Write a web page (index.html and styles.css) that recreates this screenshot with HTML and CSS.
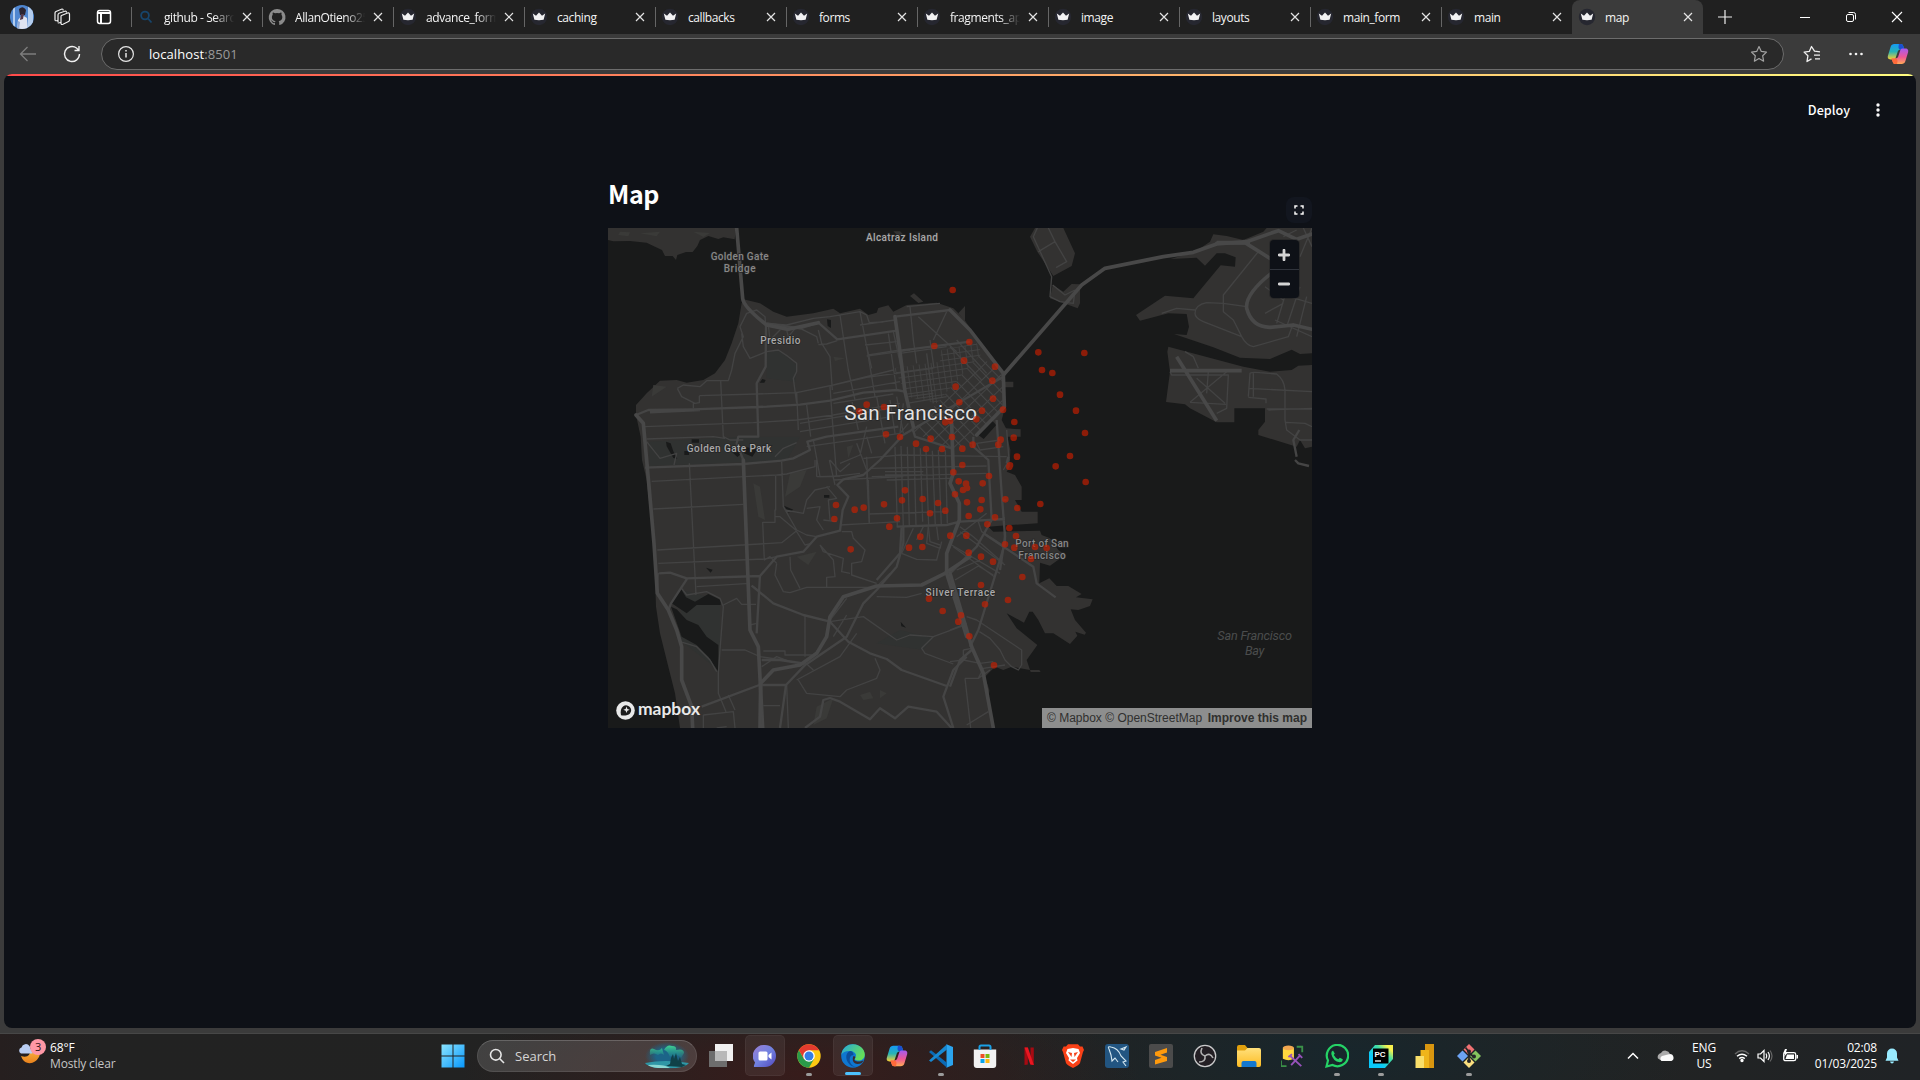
FILE: index.html
```html
<!DOCTYPE html>
<html lang="en">
<head>
<meta charset="utf-8">
<title>map</title>
<link rel="stylesheet" href="styles.css">
</head>
<body>
<svg class="defs" width="0" height="0">
  <defs>
    <linearGradient id="cpA" x1="0" y1="0" x2="0" y2="1"><stop offset="0" stop-color="#159af5"/><stop offset=".5" stop-color="#28b3b5"/><stop offset="1" stop-color="#ffd02e"/></linearGradient>
    <linearGradient id="cpB" x1="0" y1="0" x2="0" y2="1"><stop offset="0" stop-color="#a55af0"/><stop offset=".55" stop-color="#ee5795"/><stop offset="1" stop-color="#ffab55"/></linearGradient>
    <linearGradient id="win" x1="0" y1="0" x2="1" y2="1"><stop offset="0" stop-color="#8be4ff"/><stop offset="1" stop-color="#0797fb"/></linearGradient>
    <linearGradient id="edge" x1="0" y1="0" x2="1" y2=".5"><stop offset="0" stop-color="#25a7e0"/><stop offset="1" stop-color="#65df58"/></linearGradient>
    <linearGradient id="chat" x1="0" y1="0" x2="1" y2="1"><stop offset="0" stop-color="#9b7fd4"/><stop offset=".5" stop-color="#7182e0"/><stop offset="1" stop-color="#5247bd"/></linearGradient>
    <linearGradient id="pc" x1="0" y1="1" x2="1" y2="0"><stop offset=".3" stop-color="#09c9fb"/><stop offset=".65" stop-color="#43dfa4"/><stop offset=".85" stop-color="#f7f04e"/></linearGradient>
    <linearGradient id="fold" x1="0" y1="0" x2="0" y2="1"><stop offset="0" stop-color="#ffe07c"/><stop offset="1" stop-color="#fdbc22"/></linearGradient>
    <linearGradient id="moon" x1="0" y1="0" x2="0" y2="1"><stop offset="0" stop-color="#ffc24a"/><stop offset="1" stop-color="#e8811c"/></linearGradient>
    <symbol id="crown" viewBox="0 0 20 20"><circle cx="10" cy="10" r="8.2" fill="#262730"/><path d="M3.8 6.6 7 8.7 10 5.500l3 3.200 3.200-2.100-1.600 6.200q-4.600.9-9.200 0z" fill="#f2f2f4"/></symbol>
    <symbol id="x" viewBox="0 0 12 12"><path d="M2 2l8 8M10 2l-8 8" stroke="#e4e4e4" stroke-width="1.2" fill="none"/></symbol>
    <symbol id="copilot" viewBox="0 0 24 24"><path d="M8 1h7c2 0 2.500 1.500 3 3l1 3h-4c-2 0-3 1-3.500 3l-2 6c-.5 1.500-1 2-3 2H4c-3 0-3.500-2-3-4L4 4c.6-2 2-3 4-3z" fill="url(#cpA)"/><path d="M13 1h2c2 0 2.500 1.500 3 3l1 3h-4c-1.500 0-2-.5-2.500-2.500z" fill="#1b4fd0"/><path d="M16 23H9c-2 0-2.500-1.500-3-3l-1-3h4c2 0 3-1 3.500-3l2-6c.5-1.500 1-2 3-2H20c3 0 3.500 2 3 4l-3 10c-.6 2-2 3-4 3z" fill="url(#cpB)"/><path d="M11 23H9c-2 0-2.500-1.500-3-3l-1-3h4c1.500 0 2 .5 2.500 2.500z" fill="#ff6a3a"/></symbol>
  </defs>
</svg>

<header class="tabstrip">
  <div class="strip-left">
    <svg width="26" height="26" viewBox="0 0 26 26"><defs><clipPath id="av"><circle cx="13" cy="13" r="12"/></clipPath></defs><g clip-path="url(#av)"><path fill="#4f86d0" d="M0 0h26v26H0z"/><path fill="#b4cdee" d="M4 0h2v26H4zM19 0h5v26h-5z"/><path d="M10 5q4-4 7 1l-1 5h-5z" fill="#2b2430"/><path d="M8 26l1-10 4-5 5 3 1 12z" fill="#dfe3f0"/><path d="M12 10h3l-1 5-3 1z" fill="#54394a"/><path d="M9 17l2 1-1 8H8z" fill="#8fa9d6"/></g></svg>
    <svg width="18" height="18" viewBox="0 0 18 18" fill="none" stroke="#f0f0f0" stroke-width="1.200"><path d="M8.500 7.500l6-2.500q2-.7 2 1.200v5.800q0 1-1 1.500L10 16.300q-2 .7-2-1V8.500q0-.8.5-1zM5 14V7q0-1.200 1-1.700L12.500 3q1 0 1 1.500M5 14.500q0 .8 2.500 0M2 12V5q0-1 1-1.500L9 1q1.200-.2 1.200 1.500M2 12q0 1.200 2.500.5"/></svg>
    <svg width="16" height="16" viewBox="0 0 16 16" fill="none" stroke="#fff" stroke-width="1.500"><rect x="1.500" y="1.500" width="13" height="13" rx="2.200"/><path d="M1.500 4h13M5 4v10" stroke-width="2"/></svg>
  </div>
  <div class="tab"><svg class="fav" viewBox="0 0 20 20" fill="none" stroke="#17456b" stroke-width="1.800"><circle cx="9" cy="8.500" r="3.900"/><path d="M12 11.500l3.500 4"/></svg><span class="title fade">github - Search</span><svg class="x"><use href="#x"/></svg></div>
  <div class="tab"><svg class="fav" viewBox="0 0 20 20"><path fill="#8b8b8b" d="M10 2a8.200 8.200 0 0 0-2.600 16c.4.1.6-.2.6-.4v-1.500c-2.300.5-2.800-1-2.800-1-.4-1-.9-1.200-.9-1.200-.8-.5 0-.5 0-.5.9 0 1.300.9 1.300.9.8 1.300 2 1 2.500.7 0-.5.3-.9.5-1.100-1.800-.2-3.700-.9-3.700-4 0-.9.300-1.700.9-2.200-.1-.2-.4-1 .1-2.200 0 0 .7-.2 2.200.8a8 8 0 0 1 4 0c1.500-1 2.200-.8 2.200-.8.5 1.200.2 2 .1 2.200.5.600.9 1.300.9 2.200 0 3.100-1.900 3.800-3.700 4 .3.300.600.8.6 1.500v2.200c0 .2.100.5.600.4A8.200 8.200 0 0 0 10 2z"/></svg><span class="title fade">AllanOtieno254</span><svg class="x"><use href="#x"/></svg></div>
  <div class="tab"><svg class="fav"><use href="#crown"/></svg><span class="title fade">advance_form</span><svg class="x"><use href="#x"/></svg></div>
  <div class="tab"><svg class="fav"><use href="#crown"/></svg><span class="title">caching</span><svg class="x"><use href="#x"/></svg></div>
  <div class="tab"><svg class="fav"><use href="#crown"/></svg><span class="title">callbacks</span><svg class="x"><use href="#x"/></svg></div>
  <div class="tab"><svg class="fav"><use href="#crown"/></svg><span class="title">forms</span><svg class="x"><use href="#x"/></svg></div>
  <div class="tab"><svg class="fav"><use href="#crown"/></svg><span class="title fade">fragments_app</span><svg class="x"><use href="#x"/></svg></div>
  <div class="tab"><svg class="fav"><use href="#crown"/></svg><span class="title">image</span><svg class="x"><use href="#x"/></svg></div>
  <div class="tab"><svg class="fav"><use href="#crown"/></svg><span class="title">layouts</span><svg class="x"><use href="#x"/></svg></div>
  <div class="tab"><svg class="fav"><use href="#crown"/></svg><span class="title">main_form</span><svg class="x"><use href="#x"/></svg></div>
  <div class="tab"><svg class="fav"><use href="#crown"/></svg><span class="title">main</span><svg class="x"><use href="#x"/></svg></div>
  <div class="tab active"><svg class="fav"><use href="#crown"/></svg><span class="title">map</span><svg class="x"><use href="#x"/></svg></div>
  <svg class="plus" width="16" height="16" viewBox="0 0 16 16"><path d="M8 1v14M1 8h14" stroke="#eee" stroke-width="1.200"/></svg>
  <div class="winctl">
    <svg width="46" height="34" viewBox="0 0 46 34"><path d="M18 17.500h10" stroke="#fff"/></svg>
    <svg width="46" height="34" viewBox="0 0 46 34" fill="none" stroke="#fff"><rect x="18.500" y="14.500" width="7" height="7" rx="1.500"/><path d="M20.500 12.500h5q2 0 2 2v5"/></svg>
    <svg width="46" height="34" viewBox="0 0 46 34"><path d="M18 12l10 10M28 12L18 22" stroke="#fff" stroke-width="1.100"/></svg>
  </div>
</header>

<nav class="toolbar">
  <svg class="tb-back" width="20" height="20" viewBox="0 0 20 20" fill="none" stroke="#7d7d7d" stroke-width="1.300"><path d="M18 10H2.500M9.500 3L2.500 10l7 7"/></svg>
  <svg class="tb-reload" width="20" height="20" viewBox="0 0 20 20" fill="none" stroke="#f0f0f0" stroke-width="1.400"><path d="M17.500 10A7.500 7.500 0 1 1 14.500 4l2 2M17 2v4.500h-4.500"/></svg>
  <div class="omnibox">
    <svg width="18" height="18" viewBox="0 0 18 18" fill="none" stroke="#e6e6e6" stroke-width="1.200"><circle cx="9" cy="9" r="7.400"/><path d="M9 8v4.500M9 5v1.500" stroke-width="1.500"/></svg>
    <span class="url">localhost<i>:8501</i></span>
    <svg class="star" width="18" height="18" viewBox="0 0 18 18" fill="none" stroke="#a2a2a2" stroke-width="1.200" stroke-linejoin="round"><path d="M9 1.500l2.300 4.900 5.200.7-3.800 3.700.9 5.400L9 13.600l-4.600 2.600.9-5.400L1.500 7.100l5.200-.7z"/></svg>
  </div>
  <svg class="tb-fav" width="18" height="18" viewBox="0 0 18 18" fill="none" stroke="#f0f0f0" stroke-width="1.300" stroke-linejoin="round"><path d="M17 6.800l-5.500-.6L8.500 1.500 6.300 6.400l-5.200.7 3.800 3.700-.9 5.700 4.500-2.600M11 10.200h6M12 13.800h5"/></svg>
  <svg class="tb-dots" width="18" height="18" viewBox="0 0 18 18" fill="#f4f4f4"><circle cx="3.500" cy="9" r="1.300"/><circle cx="9" cy="9" r="1.300"/><circle cx="14.500" cy="9" r="1.300"/></svg>
  <svg class="tb-cop" width="22" height="22"><use href="#copilot"/></svg>
</nav>

<main class="viewport">
  <div class="page">
    <div class="stripe"></div>
    <div class="app-head"><span>Deploy</span><svg width="6" height="16" viewBox="0 0 6 16" fill="#fafafa"><circle cx="3" cy="3" r="1.700"/><circle cx="3" cy="8" r="1.700"/><circle cx="3" cy="13" r="1.700"/></svg></div>
    <section class="block">
      <h1>Map</h1>
      <div class="map">
        <svg class="mapsvg" width="704" height="500" viewBox="0 0 2112 1500">
          <defs>
            <pattern id="soma" width="25" height="29" patternUnits="userSpaceOnUse" patternTransform="rotate(-44)"><path d="M0 0H25M0 0V29" stroke="#454545" stroke-width="6" fill="none"/></pattern>
            <pattern id="hill" width="18" height="17" patternUnits="userSpaceOnUse" patternTransform="rotate(-8)"><path d="M0 0H18M0 0V17" stroke="#434343" stroke-width="5" fill="none"/></pattern>
          </defs>
          <rect width="2112" height="1500" fill="#191a1a"/>
          <g fill="#333231">
            <g transform="translate(-24 -174)">
              <path d="M24 174H408L404 208 370 202 355 207 325 198 300 210 292 228 278 246 258 246 232 255 228 270 218 258 195 258 186 240 165 230 140 218 90 213 40 214 24 210z"/>
              <path d="M430 388L480 400 520 425 560 440 640 430 700 416 720 430 780 416 805 435 830 428 835 414 865 406 880 425 920 405 1010 398 1060 415 1090 445 1150 530 1210 610 1215 635H1240V652H1215L1213 720 1205 750 1218 775 1262 778V800H1222L1231 840 1229 890 1220 905 1245 915 1265 950V990H1245L1265 1025H1313V1060L1230 1065 1165 1070 1180 1085 1320 1082 1325 1095 1350 1105 1375 1140 1395 1155 1350 1187 1320 1178 1318 1240 1348 1225 1370 1248H1405L1445 1272 1428 1282 1478 1288 1470 1308 1435 1320 1412 1318 1425 1350 1458 1388 1454 1394 1426 1385 1432 1397 1410 1422 1360 1390H1335L1315 1350 1298 1325 1288 1325 1272 1358 1220 1330 1240 1360 1250 1375 1312 1425 1280 1470 1290 1500 1235 1490 1210 1500 1185 1490 1155 1520 1168 1560 1165 1590 1183 1674H240L225 1570 205 1490 180 1390 168 1310 165 1220 155 1070 140 930 126 870 122 800 108 735V705L140 670 180 632 230 630 260 638 310 630 345 610 375 570 395 520 415 460 425 400z"/>
              <path d="M930 378l12-8 28 25-15 4zM880 184h20l8 8-14 6zM1075 430l20-22v45zM1290 1500h28l4 6h-30z"/>
            </g>
            <g transform="translate(1026 -114)">
              <path d="M255 114L240 140 262 185 310 258 365 228 375 190 340 114zM308 285L340 305 365 282 390 283V340L383 355 300 325z"/>
              <path d="M1086 114H950L940 125 880 150 830 138 790 133 780 155 735 185 662 207 740 203 765 227 800 190 825 190 857 202 855 230 812 226 730 325 645 317 558 375 570 392 655 370 710 372 717 410 710 435 672 432 790 472 870 503 960 507 1025 479 1050 492 1086 490z"/>
              <path d="M655 470L880 530 960 545 1025 540 1045 527 1086 525V770L1065 775 1050 750 1040 770 925 735V720L945 695V655H853V697H800L720 655 705 643 648 636 660 545 652 485z"/>
            </g>
          </g>
          <g fill="#303231" transform="translate(-24 -174)">
            <path d="M500 550L535 540 590 585 587 635 500 625zM147 815L430 800 600 800 560 872 150 888zM245 1260L360 1290V1440L355 1500 240 1410z"/>
            <path d="M900 1380L1000 1405 970 1440 830 1420z"/>
          </g>
          <g fill="#3a3a38" transform="translate(-24 -174)">
            <path d="M570 910l50-10-20 50-45 30zM460 940l20 10 15 100-20-10zM590 1160l60-15-25 40zM160 645l40 5-45 30zM650 1610l50-25-20 60-40 20zM780 1575l30-10 10 20-30 5zM840 1560l20 10-20 15zM700 560l35 5-30 8zM740 830l20-5-15 40zM60 185l30 2-5 12-30-4zM120 190l60-5-10 14zM280 185l50 4-20 12z"/>
          </g>
          <g fill="#191a1a" transform="translate(-24 -174)">
            <path d="M243 1257L215 1300 260 1330 290 1305 362 1305 362 1290 325 1272 285 1295 258 1282zM213 1310L245 1400 290 1425 325 1460 355 1505V1425L320 1400 295 1365 260 1350 230 1318zM198 815l14 5 8 24 12 22-12-2-20-35zM390 840l12-15 20 28-10 8zM432 830l40 8-15 22-25-10zM253 843h14v12h-14zM275 808h22v10h-22zM487 627l10 3-4 8h-14zM552 1007l28 12-14 9zM672 975h16v8h-16zM318 1193l20 6-6 9zM902 1355l16 18-14-4zM681 448l12 2v24l-10-6zM1135 795l42-42 12 12-38 42z"/>
          </g>
          <g transform="translate(576 336)">
            <path d="M335 275L540 45 605 105 609 205 520 290 518 310 458 328z" fill="url(#soma)"/>
            <path d="M280 85L420 65 424 30 530 10 545 40 410 190 325 170z" fill="url(#hill)"/>
          </g>
          <g class="road minor">
            <g transform="translate(-24 -174)">
              <path d="M232 655L250 645 300 650 320 632 385 632 395 600 405 550 430 500 420 470 440 430 470 420 495 440 497 465M425 490L430 530 450 565 500 545 535 540 565 560 590 580 590 605 580 625 590 700M500 460L560 465 640 445 690 440 780 425 800 435 808 458 850 456M655 480L665 520 690 560 697 660M720 435L745 600 765 690M780 425L800 530 825 680M655 524L680 522 712 512M298 677L470 672 590 668 700 645 800 622 1000 595M135 770L460 758 590 750 700 735 900 700M140 807L340 800 375 805M362 632L370 800 390 810 430 810M590 665L595 780M620 705L632 800M690 650L700 790 710 920M232 655L245 680 285 700 298 698V677M280 700V715M140 815L180 865 230 850 222 885M525 860L550 835 590 818M505 465L510 510 540 480 520 500M560 480L565 500 590 470 620 485 650 500 655 520M780 465L885 450M795 525L890 515M800 558L930 540M700 645L760 630 880 600M700 670L900 635M930 410L940 510M920 410L1020 400M955 440L1070 545M1000 510L1040 425M865 490L890 660M880 485L905 600M755 690L775 780M830 680L855 820M910 700L900 790M640 810L660 920 720 918M700 700L880 672M770 820L800 900M720 880L780 855 800 770M925 680L1000 670"/>
            </g>
            <g transform="translate(-24 696)">
              <path d="M155 64L530 45 560 42 645 20 645 0M160 147L430 133M172 270L545 248 590 212M175 310L495 297 530 290M268 10L288 405M545 5L550 140 590 210 620 225 650 230M527 45V150H525V187H488L493 300 510 290 530 310M290 380L450 370M245 385L260 405 320 395 360 415 370 440 360 570 355 640 355 700 378 755M370 435L410 415 425 433H468M240 545L290 560 330 600 350 635M172 400L175 340 210 338 260 355M365 570H435L480 590 550 600M310 765L400 755 405 804M310 765V804M385 705L405 750M455 377L475 390M615 465V590M490 573H555V585H640M485 620L530 590 570 605M690 485L790 470 890 540 930 525 1000 530 1090 497M1000 530L965 565 975 580 1060 612M595 660L620 700 720 710 740 690 830 655 840 630 825 595M570 290L572 330 600 385M530 310L525 345 550 395 570 398 620 382H820M680 382V352L705 350 700 300 660 255M725 215L755 215 760 235 795 270 785 305 755 310V345L830 370M805 60L808 190 720 195M808 190L900 185M700 60L910 50M650 50L700 50 780 40M688 0L705 75M690 0L720 35 750 10M800 35L808 190M650 0L650 50M590 212L540 170 527 170M555 150L610 160 620 120 645 90 690 80M680 80L710 115 685 120 690 180M620 145L660 140 650 180 670 210M670 180L710 185M590 215L615 255 635 250M660 255L670 275 730 295 725 335 750 340M740 465L700 530M740 415L690 480M830 410L920 412 965 400M770 520L720 590 590 660M490 737H540M560 675L565 804M450 495L470 490M905 280L950 298 1010 300 1020 260M940 205L905 280M985 200L990 245 1020 255M1010 200L1015 240M350 804L380 800M870 340L830 380M640 630L620 612"/>
            </g>
            <g transform="translate(576 336)">
              <path d="M200 350L208 550M285 320L292 560M303 318L310 560M322 320L328 560M342 322L348 560M361 325L368 545M378 330L386 558M397 332L406 558M415 330L424 556M436 330L442 550M190 355L300 345 620 350M210 385L560 378M215 410L560 400M255 395H370M255 405H370M260 420L450 415M205 522L440 515M300 40L440 20M205 45L300 30M200 20L215 85M340 0L350 70M380 40L400 190M390 0L402 85M0 250L270 205M0 275L260 232M20 320L300 280M200 290L215 340M450 20L545 120M470 0L560 100M320 190L440 170M330 220L420 205M290 170L310 280M270 180L285 280M325 250L300 280M600 300L530 310 540 330 610 320M620 270L627 360 610 390M620 480H610M455 615L600 700M470 690L540 660M480 560L520 590 610 670M470 590L560 520M385 560L380 610 420 625 425 605M370 560L350 600"/>
            </g>
            <g transform="translate(1026 696)">
              <path d="M30 215L165 315M10 260L135 352M15 360L85 318 130 345M85 185L95 215 165 260M50 470L80 480 215 570V615L205 630 185 620 165 600 150 570 120 535 88 515M45 655L85 655 100 625 165 615M45 655L62 804M40 570L65 565M40 570L40 600 90 610 130 605M0 510L50 490M0 605L40 600M50 795L115 755M85 655L120 630"/>
            </g>
            <g transform="translate(1026 -114)">
              <path d="M262 114L250 140 305 260 300 320 330 335 370 340 375 300M308 285L345 315 375 300M265 185L315 155 350 215 318 233M295 114L315 155M635 370L680 355 735 360M925 185L820 315V365L850 390 875 440M890 350L820 340 770 338Q735 345 735 370 735 385 760 395L875 440Q890 468 910 470L1015 440 1030 400M1060 114L1086 170M1000 340L945 370M985 310L1086 340M980 400L1010 300M1010 410L1050 290M975 390L1086 440M1040 440L1070 320M945 290L1000 330M1086 114L1050 200M1000 140L1040 120M660 545L665 555H835L830 655 800 670M720 637L830 545M720 637L828 643M775 545L770 610M740 565L825 640M705 485L730 500 745 535M895 620L900 550Q905 545 930 548L980 552Q1003 570 1005 600V690L1010 720 1050 750H1086M895 595L1086 605M895 622L948 627V640M950 657H1086M955 660L1086 655M1008 697L1065 700 1086 710M910 550V620"/>
            </g>
          </g>
          <g class="road mid">
            <path transform="translate(-24 -174)" d="M108 735L145 720 280 718 500 710 600 704 690 692 790 668 890 660 915 665M135 893L430 882 545 872 580 865 630 840 622 815 680 800 895 770M498 465L497 590 470 640 475 800 415 800 410 820 430 870V900M885 440L1050 420M900 542L1110 515M150 727L300 720M500 460L600 475 655 458 712 508 890 482"/>
            <path transform="translate(-24 696)" d="M178 340L210 338 260 355 480 348M262 355L213 430 205 450M480 345L470 520M305 740L478 675 560 675M540 804L558 675 620 610M485 600L540 600 620 612 740 530 790 430 830 390 890 320 910 250V200M455 377L520 430 610 465 690 485 745 545 810 580 860 597 905 630 1040 678M615 804L660 770 670 720 690 714 720 725 810 778 840 745 885 775 925 740 1010 755 1055 804M1100 590L1060 630 1030 710 1060 804M480 348L530 290 610 275 650 230 720 212 728 150 745 110 712 75 730 58 790 45 840 0 905 -70"/>
            <path transform="translate(576 336)" d="M290 560L440 555 480 545 615 537M305 560L300 640 230 720M337 262L345 290 455 325M610 110L300 290M520 290V320L565 360 575 540 530 620 450 700M590 240L605 460 615 590 600 690M620 370L625 350"/>
            <path transform="translate(1026 696)" d="M165 215L165 250 85 510 60 560M65 570L30 600 0 680M100 220L250 320 260 370 317 412M1035 0L1045 10 1077 18M1048 -90L1030 -60 1040 -10"/>
          </g>
          <g class="road major">
            <path transform="translate(-24 -174)" d="M410 174L428 385Q430 410 500 465M500 465L565 478 655 458M108 735L130 760 148 960 162 1120 172 1270 205 1320 230 1380 245 1430V1530L275 1610 278 1674M430 870L450 1380 475 1430 488 1674M885 440L900 545 915 665 940 770M1050 420L1110 480 1210 610"/>
            <path transform="translate(-24 696)" d="M482 670L520 630 600 615 650 580 680 530 690 470 730 410 830 378 965 375 1035 340 1110 290M480 804L482 670"/>
            <path transform="translate(576 336)" d="M610 105L613 200 530 285M455 250L460 400 450 430 478 490 478 540 440 640 440 700 500 889"/>
            <path transform="translate(1026 696)" d="M0 340L65 560 100 640 130 804"/>
            <path transform="translate(1026 -114)" d="M160 555L395 285 465 235 640 200 730 187 800 162 890 155 985 122 1040 148 1086 132M880 155L960 205M970 245Q885 310 890 355 905 412 960 412L1030 405 1086 418M800 160L890 158"/>
            <path transform="translate(1026 -114)" d="M680 500L800 692M660 542H875M800 158L900 158" class="butt"/>
          </g>
          <g class="label" text-anchor="middle">
            <text x="882" y="38" textLength="216">Alcatraz Island</text>
            <text x="395" y="95" textLength="174" class="dim">Golden Gate</text><text x="395" y="131" textLength="96" class="dim">Bridge</text>
            <text x="517" y="347" textLength="120">Presidio</text>
            <text x="363" y="671" textLength="253">Golden Gate Park</text>
            <text x="908" y="576" textLength="398" class="city">San Francisco</text>
            <text x="1302" y="956" textLength="160" class="dim">Port of San</text><text x="1302" y="992" textLength="142" class="dim">Francisco</text>
            <text x="1057" y="1103" textLength="209">Silver Terrace</text>
            <text x="1940" y="1235" textLength="224" class="bay">San Francisco</text><text x="1940" y="1282" textLength="58" class="bay">Bay</text>
          </g>
          <path class="points" transform="translate(576 336)" d="M458-150h0M403 18h0M508 6h0M492 62h0M585 80h0M577 122h0M467 140h0M478 187h0M579 176h0M200 194h0M252 201h0M178 214h0M546 212h0M609 209h0M529 238h0M450 243h0M436 247h0M643 246h0M641 293h0M456 291h0M602 299h0M595 314h0M518 314h0M258 283h0M300 291h0M348 311h0M392 296h0M378 327h0M426 327h0M487 326h0M651 350h0M630 376h0M628 380h0M487 375h0M460 397h0M567 408h0M476 424h0M498 431h0M501 444h0M489 450h0M548 430h0M465 463h0M315 451h0M306 481h0M368 477h0M414 489h0M252 493h0M191 503h0M164 509h0M108 495h0M103 537h0M390 520h0M436 512h0M501 487h0M545 480h0M541 508h0M506 528h0M585 532h0M562 553h0M616 478h0M652 504h0M721 492h0M291 535h0M268 560h0M152 628h0M361 590h0M367 621h0M327 623h0M451 587h0M499 587h0M506 638h0M543 650h0M579 665h0M615 613h0M628 564h0M648 588h0M643 623h0M705 621h0M740 624h0M693 657h0M667 711h0M715 37h0M853 39h0M726 90h0M757 99h0M780 164h0M828 212h0M855 279h0M810 348h0M767 379h0M857 426h0M543 735h0M555 793h0M624 780h0M483 826h0M475 845h0M508 889h0M582 976h0M387 776h0M428 813h0"/>
        </svg>
        <div class="full"><svg width="10" height="10" viewBox="0 0 10 10" fill="none" stroke="#fafafa" stroke-width="1.500"><path d="M1 3.500V1h2.500M6.500 1H9v2.500M9 6.500V9H6.500M3.500 9H1V6.500"/></svg></div>
        <div class="zoom"><b><svg width="12" height="12" viewBox="0 0 12 12"><path d="M6 1.200v9.600M1.200 6h9.600" stroke="#d4d4d4" stroke-width="2.800" stroke-linecap="round"/></svg></b><b><svg width="12" height="12" viewBox="0 0 12 12"><path d="M1.200 6h9.600" stroke="#d4d4d4" stroke-width="2.800" stroke-linecap="round"/></svg></b></div>
        <div class="logo"><svg width="19" height="19" viewBox="0 0 19 19"><circle cx="9.500" cy="9.500" r="9.300" fill="#e9e9e9"/><path d="M5 14.300C4.200 10 5 7.200 7 5.400a5 5 0 0 1 7 7C12 14.300 9 14.900 5 14.300z" fill="#1d1d1d"/><path d="M10.500 5.600l.9 2.300 2.300.9-2.300.9-.9 2.300-.9-2.300-2.300-.9 2.300-.9z" fill="#e9e9e9"/></svg><svg width="63" height="22" viewBox="0 0 63 22"><text x="0" y="16.300" textLength="62" lengthAdjust="spacingAndGlyphs">mapbox</text></svg></div>
        <div class="attrib"><span>© Mapbox © OpenStreetMap</span><strong>Improve this map</strong></div>
      </div>
    </section>
  </div>
</main>

<footer class="taskbar">
  <div class="weather">
    <svg width="30" height="30" viewBox="0 0 30 30"><path d="M3 18q9 3 10-7l8-3q3 5 0 11-4 7-11 6-5-1-7-7z" fill="url(#moon)"/><path d="M3 15.500a3.200 3.200 0 0 1 .5-6 4.500 4.500 0 0 1 8-1.500l3 7.500z" fill="#b9cdf2"/><circle cx="20" cy="9" r="8" fill="#ff98a6"/><text x="20" y="13" text-anchor="middle">3</text></svg>
    <div><p>68°F</p><p class="soft">Mostly clear</p></div>
  </div>
  <div class="center">
    <svg class="winlogo" width="24" height="24" viewBox="0 0 24 24"><path fill="url(#win)" d="M.5.500h11v11H.5zM12.500.5h11v11h-11zM.5 12.500h11v11H.5zM12.500 12.500h11v11h-11z"/></svg>
    <div class="search">
      <svg width="16" height="16" viewBox="0 0 16 16" fill="none" stroke="#e6e6e6" stroke-width="1.600"><circle cx="6.800" cy="6.800" r="5.300"/><path d="M10.800 10.800l4.200 4.200"/></svg>
      <span>Search</span>
      <svg class="art" width="46" height="28" viewBox="0 0 46 28"><defs><radialGradient id="sky"><stop offset=".5" stop-color="#1c6488"/><stop offset="1" stop-color="#1c6488" stop-opacity="0"/></radialGradient><linearGradient id="aur" x1="0" y1="0" x2="0" y2="1"><stop offset="0" stop-color="#3fd494"/><stop offset="1" stop-color="#1f8a90" stop-opacity=".3"/></linearGradient></defs><ellipse cx="23" cy="14" rx="22" ry="14" fill="url(#sky)"/><path d="M6 13q-1-8 4-6 5 3 8-1l2 7q-3-3-6 0-4-3-8 0zM20 8q3-6 8-4 5 0 4 4 8-2 8 3l-3 5q-3-4-6-2-4-1-5 1-2-6-6-7z" fill="url(#aur)"/><path d="M1 21q20-4 44 0-3 4-13 5H12q-9-2-11-5z" fill="#2f97a6"/><path d="M4 23q16-1 22 3H14q-8-1-10-3z" fill="#8bd8d2"/><path d="M22 24l4-2 1-6 2-4 1 5 2-6 2 8 2-4 2 7 4 1-4 2z" fill="#0f4148"/></svg>
    </div>
    <div class="apps">
      <div class="app"><svg viewBox="0 0 24 24"><path fill="#f0f0f0" d="M6 0h18v17H6z"/><path fill="#6d6d6d" d="M0 7h18v16H0z"/><path fill="#b9b9b9" d="M6 7h12v10H6z"/></svg></div>
      <div class="app hot"><svg viewBox="0 0 24 24"><path fill="url(#chat)" d="M12 1a11 11 0 1 1 0 22H2q-1.500 0-1-1.500l1-3A11 11 0 0 1 12 1z"/><rect x="5.500" y="7.500" width="9" height="9" rx="1.500" fill="#fff"/><path d="M15.500 11l3-2.500v7l-3-2.500z" fill="#fff"/></svg></div>
      <div class="app run"><svg viewBox="0 0 24 24"><circle cx="12" cy="12" r="11.700" fill="#fdc913"/><path d="M12 12L7 15 1.900 6.100A11.700 11.700 0 0 0 12 23.700l5-8.700z" fill="#2a9a49"/><path d="M12 12L7 15 1.900 6.100A11.700 11.700 0 0 1 22.200 6.300H12z" fill="#e33b2e"/><circle cx="12" cy="12" r="5.800" fill="#fff"/><circle cx="12" cy="12" r="4.500" fill="#347de6"/></svg></div>
      <div class="app hot on"><svg viewBox="0 0 24 24"><circle cx="12" cy="12" r="11.800" fill="#0f77d0"/><path d="M.3 11C1.500 3 7 0 12 .2c7 .2 11.800 5 11.800 10.300 0 4-3 6-6 6-3.600 0-4.500-1.500-3.600-2.500 2-3 0-6.500-4.500-7C5.500 6.500 1.500 8 .3 11z" fill="url(#edge)"/><path d="M9.700 7C5 7.500 4 14 7 18.500c2 3.300 6 5 9.500 4.500C11 23 7.500 18 9 13.500c.6-1.700 2-2.500 3.500-2.500 0-2-1-3.600-2.800-4z" fill="#0c4f9c"/><path d="M14.200 14c-2 2 0 3.500 3.500 3.500 1.500 0 3.500-.6 4.800-1-1 2.500-3 3.500-6 3.500-4 0-6-4-4-8 1 0 2.200.8 1.700 2z" fill="#3a2c2d"/></svg></div>
      <div class="app"><svg viewBox="-1 -1 26 26"><use href="#copilot" width="24" height="24"/></svg></div>
      <div class="app run"><svg viewBox="0 0 24 24"><path d="M17.500.3L24 3v18l-6.500 2.800z" fill="#2ba4ee"/><path d="M0 8l2-1.700 16 12.400v5z" fill="#0b6ab4"/><path d="M0 16.500l2 1.500L18 5.500V.3z" fill="#1889d2"/></svg></div>
      <div class="app"><svg viewBox="0 0 24 24"><path d="M.8 5.500h22.400V21q0 3-3 3H3.800q-3 0-3-3z" fill="#f2f2f2"/><path d="M6.500 6V3q0-1.500 1.500-1.500h8q1.500 0 1.500 1.500v3" fill="none" stroke="#1aa0e6" stroke-width="2"/><path fill="#ee4f24" d="M7.500 10h4v4h-4z"/><path fill="#7cb80d" d="M12.500 10h4v4h-4z"/><path fill="#06a3ec" d="M7.500 15h4v4h-4z"/><path fill="#fdb710" d="M12.500 15h4v4h-4z"/></svg></div>
      <div class="app"><svg viewBox="0 0 24 24"><path d="M7.500 3.500h3.300v17l-3.300.5zM13.500 3.500h3.300V21l-3.300-.5z" fill="#a60a12"/><path d="M7.500 3.500h3.400L16.800 21l-3.500-.5z" fill="#ea1621"/></svg></div>
      <div class="app"><svg viewBox="0 0 24 24"><path d="M7 .3h10l2 2.300 2.500 0L23 6l-1 2-3 11q-.7 2-7 5-6.300-3-7-5L2 8 1 6l1.600-3.400H5z" fill="#fa4117"/><path d="M12 4l5.500 1L19 9l-3 5 .5 2.500L12 20l-4.500-3.500L8 14 5 9l1.500-4z" fill="#fff"/><path d="M7 8l4 1-.5 4zM17 8l-4 1 .5 4zM9 15.500h6L12 18z" fill="#f4441c"/></svg></div>
      <div class="app"><svg viewBox="0 0 24 24"><rect width="24" height="24" rx="3" fill="#225581"/><path d="M4 5q-2-3 2-2 7 1 10 9l5 5-3 1 3 4M4 5q1 3 2 6l1 6 3-3 3 4M16 5l5-2-2 3z" fill="none" stroke="#d4e7f0" stroke-width="1.100"/></svg></div>
      <div class="app"><svg viewBox="0 0 24 24"><rect width="24" height="24" rx="2" fill="#4b4b4b"/><path d="M18 4v4.500l-6.500 2.200L18 13v4L6 20.500V16l6.500-2.200L6 11.500V8z" fill="#ff9a0c"/></svg></div>
      <div class="app"><svg viewBox="0 0 24 24" fill="none"><circle cx="12" cy="12" r="10.700" fill="#231f24" stroke="#c9c9ca" stroke-width="1.300"/><path d="M12 12q-6-2-3-8M12 12q5-4 8 2M12 12q1 6-6 6" stroke="#b3b3b3" stroke-width="1.600"/></svg></div>
      <div class="app"><svg viewBox="0 0 24 24"><path d="M0 3q0-2 2-2h6l2.500 3H22v5H0z" fill="#e1a00d"/><path d="M0 6.500h8l2.500-2.500H22q2 0 2 2V21q0 2-2 2H2q-2 0-2-2z" fill="url(#fold)"/><path d="M4.500 23v-4q0-2 2-2h11q2 0 2 2v4z" fill="#1478cf"/></svg></div>
      <div class="app"><svg viewBox="-1 0 26 24"><path d="M1 3h12v12q-6 3-12 0z" fill="#ffd83f"/><ellipse cx="7" cy="3.200" rx="6" ry="2.500" fill="#f3a750"/><path d="M16 2h6v6M-1 17v6h6" fill="none" stroke="#3b9148" stroke-width="2"/><path d="M9 12l12 11M10 22L20 11M7 13l4-3M18 10l4 4" stroke="#9752bc" stroke-width="2"/></svg></div>
      <div class="app run"><svg viewBox="0 0 24 24" fill="none"><path d="M1.500 22.500l1.500-6A10.700 10.700 0 1 1 7.500 21z" stroke="#25d366" stroke-width="2.200"/><path d="M8 6.500l1.800 3-1 1.500q1.500 3 4.500 4.200l1.500-1.500 3 1.500q-.3 3-3 3Q8 17.500 6.300 10 6 7 8 6.500z" fill="#25d366"/></svg></div>
      <div class="app run"><svg viewBox="0 0 24 24"><path d="M6 1h18v14l-8 9H0V8z" fill="url(#pc)"/><path d="M4 4.500h15.500v15H4z" fill="#000"/><text class="pct" x="5.500" y="12.500">PC</text><path d="M6 17h6" stroke="#fff" stroke-width="1.300"/></svg></div>
      <div class="app"><svg viewBox="0 0 24 24"><path d="M12 0h9v24h-9z" fill="#d9960f"/><path d="M7.500 6H16v18H7.500z" fill="#efb51b"/><path d="M2.500 12h8.500v12H2.500z" fill="#f9df6a"/></svg></div>
      <div class="app run"><svg viewBox="0 0 24 24"><path d="M12 0l5.500 5.500L12 11 6.500 5.500z" fill="#f07172"/><path d="M18.500 6.500L24 12l-5.500 5.500L13 12z" fill="#85c45e"/><path d="M12 13l5.500 5.500L12 24l-5.500-5.500z" fill="#fbdf7f"/><path d="M5.500 6.500L11 12l-5.500 5.500L0 12z" fill="#6da3f3"/><path d="M8.500 3.500L12 8v9M12 9l5 4" stroke="#252628" stroke-width="1.800" fill="none"/><g fill="#252628"><circle cx="12" cy="7.500" r="2"/><circle cx="12" cy="17" r="2"/><circle cx="17" cy="12.500" r="2"/></g></svg></div>
    </div>
  </div>
  <div class="tray">
    <svg class="chev" width="12" height="8" viewBox="0 0 12 8"><path d="M1 6.500l5-5 5 5" fill="none" stroke="#fff" stroke-width="1.500"/></svg>
    <svg class="cloud" width="18" height="12" viewBox="0 0 18 12"><path d="M1 8.500A4 4 0 0 1 4 3a5 5 0 0 1 9 1l-8 7z" fill="#aaa"/><path d="M4.500 11A3 3 0 0 1 5 6l8-2a3.700 3.700 0 0 1 1.500 7z" fill="#fafafa"/></svg>
    <div class="lang">ENG<br>US</div>
    <svg class="wifi" width="16" height="14" viewBox="0 0 16 14" fill="none" stroke="#fff" stroke-width="1.400"><path d="M1 5q7-6.500 14 0" stroke="#666"/><path d="M3 7.300q5-4.300 10 0M5.200 9.600q2.800-2.300 5.600 0"/><circle cx="8" cy="11.500" r="1" fill="#fff"/></svg>
    <svg class="vol" width="17" height="14" viewBox="0 0 17 14" fill="none" stroke="#fff" stroke-width="1.200"><path d="M1 5h2.500l3.500-3.500v11L3.500 9H1zM9 4.500q1.500 2.500 0 5M11 3q2.800 4 0 8"/><path d="M13 1.500q4 5.500 0 11" stroke="#666"/></svg>
    <svg class="bat" width="17" height="14" viewBox="0 0 17 14"><rect x="1.700" y="3.700" width="12" height="8" rx="1.800" fill="none" stroke="#fff" stroke-width="1.300"/><path d="M5 5.500h7v4.500H3.500zM14.500 6H16v3.500h-1.500zM3 0L1 4.500h2L2 8l4-5H4L5 0z" fill="#fff"/></svg>
    <div class="clock">02:08<br>01/03/2025</div>
    <svg class="bell" width="14" height="16" viewBox="0 0 14 16"><path d="M7 .5a5 5 0 0 1 5 5v4l1.500 3.200H.5L2 9.500v-4a5 5 0 0 1 5-5zM5 13.500h4q-.5 2-2 2t-2-2z" fill="#99ebff"/></svg>
  </div>
</footer>
</body>
</html>
```
FILE: styles.css
```css
* { box-sizing: border-box; }
body { margin: 0; width: 1920px; height: 1080px; overflow: hidden; display: flex; flex-direction: column; background: #3b3b3b; color: #fff; font-family: "Open Sans", "Noto Sans", sans-serif; }
svg { display: block; flex: none; }
p { margin: 0; }
.defs { position: absolute; }

.tabstrip { height: 34px; background: #202020; display: flex; align-items: center; }
.strip-left { width: 131px; padding-left: 9px; display: flex; align-items: center; flex: none; }
.strip-left svg:nth-child(2) { margin-left: 18px; }
.strip-left svg:nth-child(3) { margin-left: 25px; }
.tab { width: 131px; height: 34px; flex: none; display: flex; align-items: center; padding-left: 5px; background: linear-gradient(#666, #666) 0 50% / 1px 20px no-repeat; }
.tab.active { background: #3b3b3b; border-radius: 8px 8px 0 0; }
.fav { width: 20px; height: 20px; }
.title { width: 74px; margin-left: 8px; font-size: 12px; letter-spacing: -.42px; line-height: 18px; white-space: nowrap; overflow: hidden; color: #f4f4f4; padding-top: 1px; }
.fade { width: 70px; margin-right: 4px; -webkit-mask-image: linear-gradient(90deg, #000 72%, transparent); mask-image: linear-gradient(90deg, #000 72%, transparent); }
.tab .x { width: 12px; height: 12px; margin-left: 3px; }
.plus { margin-left: 14px; }
.winctl { display: flex; margin-left: auto; }

.toolbar { height: 40px; display: flex; align-items: center; background: #3b3b3b; }
.tb-back { margin-left: 18px; }
.tb-reload { margin-left: 24px; }
.omnibox { width: 1683px; height: 32px; margin-left: 19px; border: 1px solid #6c6c6c; border-radius: 16px; background: #292929; display: flex; align-items: center; padding: 0 15px; }
.url { margin-left: 14px; font-size: 13px; letter-spacing: .08px; }
.url i { font-style: normal; color: #9a9a9a; }
.star { margin-left: auto; }
.tb-fav { margin-left: 19px; }
.tb-dots { margin-left: 26px; }
.tb-cop { margin-left: 22px; }

.viewport { height: 959px; padding: 0 4px 5px; }
.page { height: 954px; background: #0e1117; border-radius: 8px; overflow: hidden; }
.stripe { height: 2px; background: linear-gradient(90deg, #ff4b4b, #ffa868 55%, #fffd80); }
.app-head { height: 68px; display: flex; align-items: center; justify-content: flex-end; padding-right: 35px; gap: 25px; font: 500 12.6px "Noto Sans CJK SC", sans-serif; }
.app-head span { margin-top: -2px; }
.block { width: 704px; margin: 0 auto; }
h1 { margin: 25px 0 0; height: 59px; font: bold 25px/48px "Noto Sans CJK SC", sans-serif; letter-spacing: -.4px; }
.map { position: relative; width: 704px; height: 500px; }
.road { fill: none; stroke: #454545; stroke-linejoin: round; }
.minor { stroke-width: 4; stroke: #434343; }
.mid { stroke-width: 7; }
.major { stroke-width: 11; stroke: #484848; stroke-linecap: round; }
.butt { stroke-linecap: butt; }
.label { font: 500 30px Roboto, sans-serif; fill: #a9a9a9; paint-order: stroke; stroke: #252525; stroke-width: 4px; }
.label .dim { fill: #878787; }
.label .city { font-size: 62px; font-weight: 400; fill: #e2e2e2; }
.label .bay { font-size: 38px; font-style: italic; font-weight: 400; fill: #4b4d4d; stroke: none; }
.points { fill: none; stroke: rgb(200, 30, 0); stroke-opacity: .66; stroke-width: 20; stroke-linecap: round; }
.full { position: absolute; right: 0; top: -31px; width: 26px; height: 26px; border-radius: 8px; background: #12161f; display: grid; place-items: center; }
.zoom { position: absolute; right: 13px; top: 12px; width: 29px; height: 58px; border-radius: 4px; background: #0e1117; box-shadow: 0 0 0 1px #1b1c1f66; }
.zoom b { height: 29px; display: grid; place-items: center start; padding-left: 8px; }
.zoom b + b { border-top: 1px solid #30343c; }
.logo { position: absolute; left: 8px; bottom: 7px; display: flex; align-items: center; gap: 3px; }
.logo text { font: 700 16.5px Lato, sans-serif; fill: #e9e9e9; }
.attrib { position: absolute; right: 0; bottom: 0; width: 270px; height: 20px; padding: 0 5px; background: #8d8e8e; color: #30302f; display: flex; justify-content: space-between; font: 12px/20px "Liberation Sans", sans-serif; white-space: nowrap; }

.taskbar { height: 47px; padding-bottom: 2px; display: flex; align-items: center; border-top: 1px solid #474747; background: radial-gradient(ellipse 340px 90px at 800px 40px, #371c1b, transparent), radial-gradient(ellipse 350px 100px at 1340px 20px, #18262c, transparent), linear-gradient(90deg, #261f1f, #222 5%, #222322 80%, #202326); }
.weather { width: 441px; padding-left: 18px; display: flex; align-items: center; gap: 2px; font-size: 12px; line-height: 16px; letter-spacing: -.15px; }
.weather svg { margin-top: -6px; }
.weather text { font-size: 11px; fill: #301216; }
.soft { color: #c5c5c5; }
.center { display: flex; align-items: center; flex: none; }
.winlogo { margin-left: -.5px; margin-right: .5px; }
.search { width: 220px; height: 32px; margin-left: 12px; padding: 0 6px 0 11px; border: 1px solid #ffffff16; border-top-color: #ffffff30; border-radius: 16px; background: #ffffff24; display: flex; align-items: center; font-size: 13px; color: #d5d5d5; }
.search span { margin-left: 10px; }
.art { margin-left: auto; }
.apps { display: flex; margin-left: 2px; }
.app { position: relative; width: 44px; height: 44px; display: grid; place-items: center; }
.app svg { width: 24px; height: 24px; }
.hot { width: 40px; margin: 0 2px; height: 41px; margin-top: 1px; border-radius: 5px; background: #ffffff10; box-shadow: inset 0 0 0 1px #ffffff0c; }
.run::after, .on::after { content: ""; position: absolute; bottom: 2px; left: 50%; width: 6px; height: 3px; margin-left: -3px; border-radius: 2px; background: #9b9b9b; }
.on::after { bottom: 1px; width: 16px; margin-left: -8px; background: #4cc2ff; }
.pct { font: bold 8px "Liberation Sans", sans-serif; fill: #fff; }
.tray { display: flex; align-items: center; margin-left: auto; font-size: 12px; line-height: 16px; letter-spacing: -.15px; }
.cloud { margin-left: 18px; }
.lang { width: 32px; margin-left: 13px; text-align: center; }
.wifi { margin-left: 14px; }
.vol { margin-left: 7px; }
.bat { margin-left: 8px; }
.clock { width: 72px; margin-left: 6px; text-align: right; }
.bell { margin: 0 21px 0 8px; }
```
